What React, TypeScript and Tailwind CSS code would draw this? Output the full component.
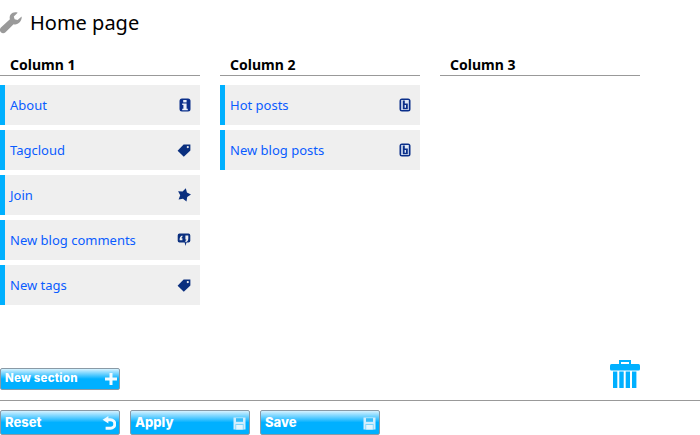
import type { ReactNode } from "react";

const sans = "font-['Noto_Sans','Open_Sans',sans-serif]";

const InfoIcon = () => (
  <svg width="12" height="14" viewBox="0 0 12 14">
    <rect x="0.5" y="0.5" width="11" height="13" rx="2.5" fill="#0a2f8a" />
    <rect x="4.2" y="2" width="3.4" height="2.4" fill="#e8eef8" />
    <path d="M3.2 5.4h4.4v5.4h1.2v1.5H3.2v-1.5h1.2V6.9H3.2z" fill="#e8eef8" />
  </svg>
);

const TagIcon = () => (
  <svg width="14" height="13" viewBox="0 0 14 13">
    <path d="M6.6.6h6.8v6L6.8 12.8.6 6.8z" fill="#0a2f7f" />
    <circle cx="10.8" cy="3.1" r="1.1" fill="#efefef" />
  </svg>
);

const StarIcon = () => (
  <svg width="14" height="14" viewBox="0 0 14 14">
    <path d="M8.8.2 9.95 4.6 14 6.6 10.2 9.1 9.5 13.5 6 10.7 1.6 11.4 3.2 7.2 1.1 3.2 5.6 3.45z" fill="#0a2f7f" />
  </svg>
);

const CommentIcon = () => (
  <svg width="14" height="14" viewBox="0 0 14 14">
    <path d="M2.5.6h9A1.8 1.8 0 0 1 13.3 2.4v5.4A1.8 1.8 0 0 1 11.5 9.6H9.4L8.6 13 7.6 9.6h-5A1.8 1.8 0 0 1 .7 7.8V2.4A1.8 1.8 0 0 1 2.5.6z" fill="#0a2f7f" />
    <path d="M2.6 7.2c0-2.6.8-4.2 2.8-4.6v1.4c-.7.2-1 .6-1 1.2h1v2H2.6zM8.4 2.4h2.9v2.8c0 2.2-.9 3.6-2.9 4V7.8c.7-.2 1-.7 1-1.3h-1z" fill="#efefef" />
  </svg>
);

const BlogIcon = () => (
  <svg width="12" height="14" viewBox="0 0 12 14">
    <rect x="0.5" y="0.5" width="11" height="13" rx="2.5" fill="#0a2f8a" />
    <rect x="2.2" y="2" width="7.6" height="10" fill="#dfe8f6" />
    <path d="M3.8 2.6h2v2.8h3v5.9h-5zM5.6 7.1v2.6h1.4V7.1z" fill="#0a2f8a" />
  </svg>
);

const SaveIcon = () => (
  <svg width="13" height="13" viewBox="0 0 13 13">
    <path d="M.5.5h12v12H.5z" fill="#d3eefc" />
    <path d="M3 1.2h7v3.6H3z" fill="#35bdfa" />
    <path d="M2.4 7h8.2v5.5H2.4z" fill="#7fd6fc" />
    <path d="M3.2 8h6.6v4.5H3.2z" fill="#e4f6fe" />
  </svg>
);

const PlusIcon = () => (
  <svg width="14" height="14" viewBox="0 0 14 14">
    <path d="M5.5 1h3v4.5H13v3H8.5V13h-3V8.5H1v-3h4.5z" fill="#f2fbff" />
  </svg>
);

const UndoIcon = () => (
  <svg width="14" height="15" viewBox="0 0 14 15" fill="none">
    <path d="M0.6 3.8 6.4 0v7.4z" fill="#f2fbff" />
    <path d="M5 3.8h3.6a4 4 0 0 1 0 8.4H3.6" stroke="#f2fbff" strokeWidth="3" />
  </svg>
);

const WrenchIcon = () => (
  <svg width="22" height="22" viewBox="0 0 22 22">
    <path d="M21.6 4.4 17.6 8l-3-.7-.8-2.8L17.7.8c-2.7-1-5.4-.3-6.9 1.5-1.2 1.5-1.4 3.3-.9 5L.9 15.6c-1.3 1.3-1.3 3.4 0 4.7 1.3 1.2 3.3 1.2 4.6-.1l8.1-8c1.8.5 3.7.2 5.2-1.1 1.9-1.6 3.3-4.2 2.8-6.7z" fill="#9a9a9a" />
  </svg>
);

const TrashIcon = () => (
  <svg width="30" height="30" viewBox="0 0 30 30">
    <path d="M9 0h12v5h-2V2h-8v3H9z" fill="#00b0ff" />
    <rect x="0" y="4" width="30" height="6.5" rx="1.5" fill="#00b0ff" />
    <path d="M3 11.5h4.3V28H3zM9.3 11.5h4.4V28H9.3zM15.7 11.5H20V28h-4.3zM22 11.5h4.4V28H22z" fill="#00b0ff" />
  </svg>
);

type Section = { label: string; icon: ReactNode };

const columns: { title: string; items: Section[] }[] = [
  {
    title: "Column 1",
    items: [
      { label: "About", icon: <InfoIcon /> },
      { label: "Tagcloud", icon: <TagIcon /> },
      { label: "Join", icon: <StarIcon /> },
      { label: "New blog comments", icon: <CommentIcon /> },
      { label: "New tags", icon: <TagIcon /> },
    ],
  },
  {
    title: "Column 2",
    items: [
      { label: "Hot posts", icon: <BlogIcon /> },
      { label: "New blog posts", icon: <BlogIcon /> },
    ],
  },
  { title: "Column 3", items: [] },
];

function GradientButton({ label, icon, tall }: { label: string; icon: ReactNode; tall?: boolean }) {
  return (
    <button
      type="button"
      className={
        "flex w-[120px] items-center justify-between rounded-[2px] border border-[#8a9aa6] bg-[linear-gradient(#d6f2ff_0%,#00b0ff_50%,#00b0ff_100%)] pl-1 font-['Inter',sans-serif] font-extrabold text-white " +
        (tall ? "h-[25px] pr-[3px] pt-[1px] text-[13px]" : "h-[22px] pr-[1px] text-[11.5px] tracking-[0.2px]")
      }
    >
      <span>{label}</span>
      {icon}
    </button>
  );
}

export default function App() {
  return (
    <div className={"h-[435px] w-[700px] overflow-hidden bg-white " + sans}>
      <div className="flex h-[47px] items-center gap-2 pb-[1px]">
        <WrenchIcon />
        <h1 className="text-[20px] leading-none text-black">Home page</h1>
      </div>

      <div className="flex h-[314px] gap-5">
        {columns.map((col) => (
          <div key={col.title} className="w-[200px]">
            <h2 className="h-[29px] border-b border-[#999] pl-2.5 pt-[8px] text-[14px] leading-[20px] font-bold text-black">
              {col.title}
            </h2>
            <ul className="mt-[9px] flex flex-col gap-[5px]">
              {col.items.map((item) => (
                <li
                  key={item.label}
                  className="flex h-10 items-center justify-between border-l-[5px] border-[#00b0ff] bg-[#efefef] pl-[5px] pr-[9px]"
                >
                  <span className="pt-[2px] text-[13px] text-[#0a5cff]">{item.label}</span>
                  {item.icon}
                </li>
              ))}
            </ul>
          </div>
        ))}
      </div>

      <div className="flex h-[40px] items-end justify-between border-b border-[#999] pb-[10px] pr-[60px]">
        <GradientButton label="New section" icon={<PlusIcon />} />
        <TrashIcon />
      </div>

      <div className="mt-[9px] flex gap-2.5">
        <GradientButton tall label="Reset" icon={<UndoIcon />} />
        <GradientButton tall label="Apply" icon={<SaveIcon />} />
        <GradientButton tall label="Save" icon={<SaveIcon />} />
      </div>
    </div>
  );
}
